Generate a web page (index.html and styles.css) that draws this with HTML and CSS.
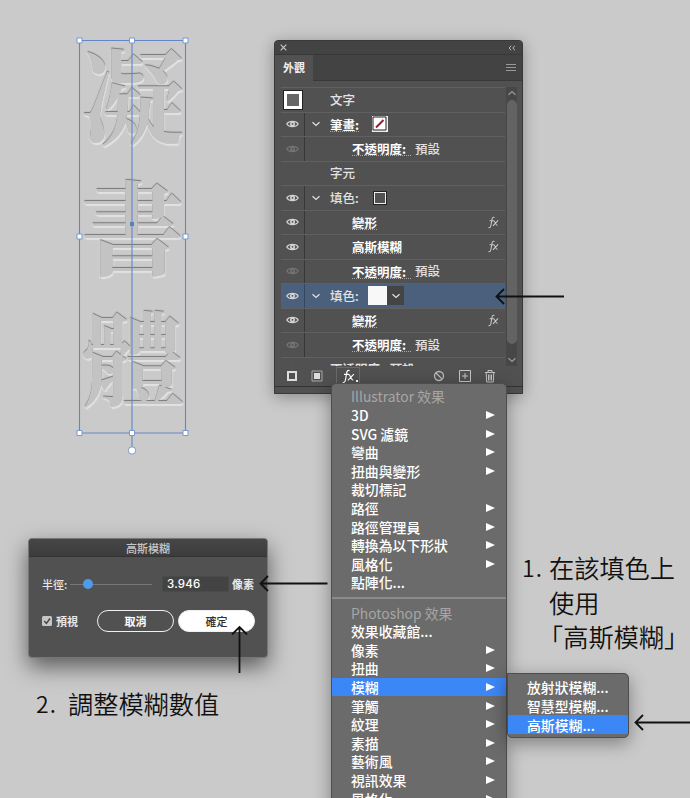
FILE: index.html
```html
<!DOCTYPE html>
<html lang="zh-Hant">
<head>
<meta charset="utf-8">
<title>高斯模糊</title>
<link rel="stylesheet" href="styles.css">
</head>
<body>
<svg class="defs" width="0" height="0" aria-hidden="true">
  <defs>
    <symbol id="eye" viewBox="0 0 14 10"><path d="M.8 5C3.2 1.3 10.8 1.3 13.2 5 10.8 8.7 3.2 8.7.8 5Z" fill="none" stroke="currentColor" stroke-width="1.3"/><circle cx="7" cy="5" r="2.7" fill="currentColor"/><circle cx="7" cy="4.8" r="1" fill="#505050"/></symbol>
    <symbol id="chev" viewBox="0 0 10 6"><path d="M1.5 1.2 5 4.5 8.5 1.2" fill="none" stroke="currentColor" stroke-width="1.2"/></symbol>
    <symbol id="fx" viewBox="0 0 12 14"><path d="M7 1.6C5 .7 4.6 2.2 4.2 4.4L3.2 10C2.8 12.3 2 13 .6 12.4M1.8 5h4.2M6 5c2 0 2 5.3 4.4 5.3M11 4.7 5.4 10.6" fill="none" stroke="currentColor" stroke-width="1.1"/></symbol>
  </defs>
</svg>
<main class="canvas">
  <section class="artwork">
    <div class="glyphs"><span>凝</span><span>書</span><span>體</span></div>
    <svg class="selection" width="120" height="430" viewBox="0 0 120 430">
      <g fill="none" stroke="#6485c8" stroke-width="1.1"><path d="M9.500 10.500H115.500V403H9.500ZM62 10.500V417"/></g>
      <g fill="#fff" stroke="#7699cf"><path d="M7 8h5v5H7zM59.500 8h5v5h-5zM113 8h5v5h-5zM7 204h5v5H7zM113 204h5v5h-5zM7 400.500h5v5H7zM59.500 400.500h5v5h-5zM113 400.500h5v5h-5z"/><circle cx="62" cy="420.500" r="3.700"/></g>
      <path d="M60 192h4v4h-4z" fill="#5b7fc4"/>
    </svg>
  </section>

  <section class="panel">
    <header class="panel-bar">
      <svg width="7" height="7" viewBox="0 0 7 7"><path d="M.7.7 6.300 6.300M6.300.7.7 6.300" stroke="#ccc" stroke-width="1.100"/></svg>
      <svg width="8" height="6" viewBox="0 0 8 6"><path d="M3.300.8 1 3 3.300 5.200M7 .8 4.700 3 7 5.200" fill="none" stroke="#bbb"/></svg>
    </header>
    <div class="tabs"><div class="tab">外觀</div><div class="burger"><i></i><i></i><i></i></div></div>
    <div class="panel-body">
      <div class="list">
        <div class="row plain"><span class="eye"><i class="thumb"></i></span><span class="label">文字</span></div>
        <div class="row"><span class="eye"><svg><use href="#eye"/></svg></span><svg class="chev"><use href="#chev"/></svg><b class="link">筆畫:</b><svg class="none" viewBox="0 0 16 16"><path fill="#eee" d="M0 0h16v16H0z"/><path fill="#fff" stroke="#222" d="M1 1h13v13H1z"/><path d="M4 11.500 11.500 4" stroke="#8a2038" stroke-width="2"/></svg></div>
        <div class="row"><span class="eye off"><svg><use href="#eye"/></svg></span><span class="sub"><b class="link">不透明度:&nbsp;</b><span class="value">預設</span></span></div>
        <div class="row plain"><span class="eye"></span><span class="label">字元</span></div>
        <div class="row"><span class="eye"><svg><use href="#eye"/></svg></span><svg class="chev"><use href="#chev"/></svg><span class="name">填色:</span><i class="swatch"></i></div>
        <div class="row"><span class="eye"><svg><use href="#eye"/></svg></span><span class="sub"><b class="link">變形</b></span><svg class="fx"><use href="#fx"/></svg></div>
        <div class="row"><span class="eye"><svg><use href="#eye"/></svg></span><span class="sub"><b class="link">高斯模糊</b></span><svg class="fx"><use href="#fx"/></svg></div>
        <div class="row"><span class="eye off"><svg><use href="#eye"/></svg></span><span class="sub"><b class="link">不透明度:&nbsp;</b><span class="value">預設</span></span></div>
        <div class="row active"><span class="eye"><svg><use href="#eye"/></svg></span><svg class="chev"><use href="#chev"/></svg><span class="name">填色:</span><i class="fill"></i><span class="drop"><svg width="10" height="6"><use href="#chev"/></svg></span></div>
        <div class="row"><span class="eye"><svg><use href="#eye"/></svg></span><span class="sub"><b class="link">變形</b></span><svg class="fx"><use href="#fx"/></svg></div>
        <div class="row"><span class="eye off"><svg><use href="#eye"/></svg></span><span class="sub"><b class="link">不透明度:&nbsp;</b><span class="value">預設</span></span></div>
        <div class="row plain"><span class="eye off"><svg><use href="#eye"/></svg></span><b class="label">不透明度:&nbsp;&nbsp;預設</b></div>
      </div>
      <div class="scroll"><svg class="up"><use href="#chev"/></svg><i class="handle"></i><svg><use href="#chev"/></svg></div>
    </div>
    <footer class="tools">
      <svg class="t1" width="12" height="12"><path d="M2 2h8v8H2z" fill="none" stroke="#ddd" stroke-width="2"/></svg>
      <svg class="t2" width="12" height="12"><path d="M1 1h10v10H1z" fill="none" stroke="#aaa"/><path d="M3 3h6v6H3z" fill="#ddd"/></svg>
      <span class="fxbtn"><svg width="13" height="15"><use href="#fx"/></svg><i></i></span>
      <svg class="t4" width="12" height="12"><circle cx="6" cy="6" r="4.500" fill="none" stroke="#bbb" stroke-width="1.300"/><path d="m3 3 6 6" stroke="#bbb" stroke-width="1.300"/></svg>
      <svg class="t5" width="12" height="12"><path d="M.5.5h11v11H.5zM6 3v6M3 6h6" fill="none" stroke="#c5c5c5"/></svg>
      <svg class="t6" width="12" height="13"><path d="M1 2.500h10M4 2.500v-2h4v2M2.200 2.500l.5 9.500h6.600l.5-9.500M4.500 4.500v6M6 4.500v6M7.500 4.500v6" fill="none" stroke="#c5c5c5"/></svg>
    </footer>
  </section>

  <nav class="menu effects">
    <div class="item head">Illustrator 效果</div>
    <div class="item more">3D</div>
    <div class="item more">SVG 濾鏡</div>
    <div class="item more">彎曲</div>
    <div class="item more">扭曲與變形</div>
    <div class="item">裁切標記</div>
    <div class="item more">路徑</div>
    <div class="item more">路徑管理員</div>
    <div class="item more">轉換為以下形狀</div>
    <div class="item more">風格化</div>
    <div class="item">點陣化...</div>
    <div class="sep"></div>
    <div class="item head">Photoshop 效果</div>
    <div class="item">效果收藏館...</div>
    <div class="item more">像素</div>
    <div class="item more">扭曲</div>
    <div class="item more on">模糊</div>
    <div class="item more">筆觸</div>
    <div class="item more">紋理</div>
    <div class="item more">素描</div>
    <div class="item more">藝術風</div>
    <div class="item more">視訊效果</div>
    <div class="item more">風格化</div>
  </nav>

  <nav class="menu blurs">
    <div class="item">放射狀模糊...</div>
    <div class="item">智慧型模糊...</div>
    <div class="item on">高斯模糊...</div>
  </nav>

  <section class="dialog">
    <header>高斯模糊</header>
    <div class="radius"><span class="rl">半徑:</span><span class="slider"><i></i></span><span class="field">3.946</span><b>像素</b></div>
    <div class="actions">
      <svg width="10" height="10"><rect width="10" height="10" rx="1.500" fill="#c6c6c6"/><path d="m2.200 5 2.200 2.300L8 2.500" fill="none" stroke="#444" stroke-width="1.400"/></svg>
      <b>預視</b><span class="btn cancel">取消</span><span class="btn ok">確定</span>
    </div>
  </section>

  <div class="note one"><span>1.</span><p>在該填色上<br>使用<br><span class="quote">「高斯模糊」</span></p></div>
  <div class="note two"><span>2.</span><p>調整模糊數值</p></div>

  <svg class="arrows" width="690" height="798" viewBox="0 0 690 798">
    <g fill="none" stroke="#111" stroke-width="1.800">
      <path d="M564 296.500H496.500M504 289l-7.500 7.500 7.500 7.500"/>
      <path d="M327.500 583.500H261M268 576l-7.500 7.500 7.500 7.500"/>
      <path d="M239.500 673V627M232 634.500l7.500-7.500 7.500 7.500"/>
      <path d="M690 722.500H635.500M643 715l-7.500 7.500 7.500 7.500"/>
    </g>
  </svg>
</main>
</body>
</html>
```

FILE: styles.css
```css
* { box-sizing: border-box; }
body { margin: 0; background: #cacaca; font-family: "Noto Sans CJK TC", sans-serif; }
p { margin: 0; }
svg { display: block; flex: none; }
i { display: block; flex: none; }
.defs { position: absolute; }
.canvas { position: relative; width: 690px; height: 798px; overflow: hidden; background: #cacaca; }

.artwork { position: absolute; left: 70px; top: 30px; width: 120px; height: 430px; }
.glyphs { display: flex; flex-direction: column; align-items: center; padding: 0 0 0 5px; }
.glyphs span {
  height: 131.500px; line-height: 122px; font-size: 103px; font-weight: 700;
  font-family: "Noto Serif CJK TC", "Noto Sans CJK TC", serif; color: #c3c3c3;
  text-shadow: 0 -1px 1px #777, 1px 1.500px 1px #e2e2e2, -1px 1px 1px #d9d9d9;
}
.selection { position: absolute; left: 0; top: 0; }

.panel {
  position: absolute; left: 274px; top: 40px; width: 249px; height: 354px;
  display: flex; flex-direction: column; background: #515151; color: #e2e2e2;
  border: 1px solid #393939; border-radius: 4px 4px 0 0;
  box-shadow: 0 3px 16px rgba(0,0,0,.32); font-size: 12.500px; font-weight: 500;
}
.panel-bar { height: 14px; display: flex; align-items: center; justify-content: space-between; padding: 0 6px 0 5px; background: #434343; border-bottom: 1px solid #383838; border-radius: 4px 4px 0 0; }
.tabs { height: 26px; display: flex; justify-content: space-between; align-items: center; background: #434343; border-bottom: 1px solid #393939; padding-right: 6px; }
.tab { height: 26px; width: 38px; line-height: 24px; text-align: center; background: #515151; font-size: 11px; font-weight: 700; color: #f0f0f0; }
.burger { width: 10px; display: flex; flex-direction: column; gap: 2px; }
.burger i { height: 1.300px; background: #999; }
.panel-body { display: flex; margin: 6px 5px 0 6px; height: 279px; gap: 1px; }
.list { width: 225px; overflow: hidden; border-top: 1px solid #606060; }
.row { display: flex; align-items: center; height: 24.500px; border-bottom: 1px solid #606060; line-height: 22px; white-space: nowrap; }
.eye { flex: none; width: 24px; height: 100%; display: flex; align-items: center; justify-content: center; border-right: 1px solid #373737; color: #d2d2d2; }
.plain .eye { border-color: transparent; }
.eye svg { width: 13px; height: 10px; }
.eye.off { color: #747474; }
.thumb { width: 18px; height: 18px; border: 3px solid #fff; outline: 1px solid #222; background: #666; }
.label { padding-left: 25px; }
.chev { width: 10px; height: 6px; margin: 0 9px 0 6px; }
.name, .row > .link { width: 30px; }
.link { font-weight: 700; color: #fff; line-height: 15px; background: repeating-linear-gradient(90deg, #aaa 0 1px, transparent 1px 2px) bottom / 100% 1px no-repeat; }
.sub { padding-left: 47px; flex: 1; display: flex; align-items: center; }
.sub .link:not(:last-child) { width: 60px; margin-right: 3px; }
.none { width: 16px; height: 16px; margin-left: 12px; }
.swatch { width: 12px; height: 12px; margin-left: 14px; border: 1px solid #eee; outline: 1px solid #222; }
.fx { width: 11px; height: 13px; margin-right: 6px; color: #ccc; }
.active { background: #4a607d; }
.active .eye { border-color: #334660; }
.fill { width: 19px; height: 19px; margin-left: 8px; background: #f8f8f8; }
.drop { width: 17px; height: 19px; display: flex; align-items: center; justify-content: center; background: #444; }
.scroll { width: 11px; display: flex; flex-direction: column; align-items: center; background: #474747; padding: 3px 0; color: #999; }
.scroll svg { width: 10px; height: 6px; }
.scroll .up { transform: rotate(180deg); }
.handle { width: 10px; height: 244px; margin: 4px 0 13px; border-radius: 5px; background: #636363; }
.tools { height: 21px; display: flex; align-items: center; border-bottom: 1px solid #333; padding-left: 11px; margin-right: -1px; }
.t2 { margin-left: 13px; }
.fxbtn { width: 24px; height: 19px; margin-left: 13px; border: 1px solid #6a6a6a; display: flex; align-items: center; gap: 1px; padding-left: 5px; color: #fff; }
.fxbtn i { width: 2px; height: 2px; background: #fff; margin-top: 9px; }
.t4 { margin-left: 73px; }
.t5 { margin-left: 14px; }
.t6 { margin-left: 13px; }

.menu { position: absolute; background: #6b6b6b; border: 1px solid #4d4d4d; box-shadow: 0 5px 18px rgba(0,0,0,.38); color: #fff; font-size: 13.850px; font-weight: 500; }
.item { display: flex; align-items: center; justify-content: space-between; height: 18.620px; line-height: 18px; padding: 0 11px 0 19px; white-space: nowrap; }
.head { color: #a6a6a6; font-weight: 400; }
.more::after { content: ""; border-left: 9px solid #fff; border-top: 4.500px solid transparent; border-bottom: 4.500px solid transparent; }
.on { background: #3c87f6; }
.effects { left: 331px; top: 383px; width: 176px; height: 440px; padding-top: 3px; border-radius: 5px 5px 0 0; }
.sep { height: 2px; margin: 5px 0 4.500px; background: #8b8b8b; }
.blurs { left: 507px; top: 673px; width: 122px; height: 65px; padding-top: 4px; border-radius: 0 5px 5px 5px; }

.dialog { position: absolute; left: 28px; top: 538px; width: 240px; height: 120px; background: #515151; border: 1px solid #777; border-radius: 4px; box-shadow: 0 9px 22px rgba(0,0,0,.55); color: #e8e8e8; font-size: 11px; font-weight: 500; }
.dialog header { height: 18px; line-height: 18px; text-align: center; background: linear-gradient(#464646, #3c3c3c); border-bottom: 1px solid #333; border-radius: 3px 3px 0 0; color: #c8c8c8; }
.radius { display: flex; align-items: center; height: 16px; margin: 19px 0 0 13px; white-space: nowrap; }
.rl { width: 28px; }
.slider { width: 82px; height: 10px; display: flex; align-items: center; padding-left: 13px; background: linear-gradient(#777, #777) center / 100% 1px no-repeat; }
.slider i { width: 10px; height: 10px; border-radius: 50%; background: #4d9bea; }
.field { width: 67px; height: 16px; line-height: 16px; margin: 0 3px 0 10px; padding-left: 4px; background: #434343; border: 1px solid #4a4a4a; line-height: 14px; color: #fff; font: 500 11.500px/14px Inter, sans-serif; letter-spacing: .2px; }
.actions { display: flex; align-items: center; margin: 18px 0 0 13px; height: 22px; }
.actions b { margin-left: 4px; width: 23px; }
.btn { width: 77px; height: 22px; line-height: 20px; text-align: center; border: 1px solid #f0f0f0; border-radius: 11px; color: #fff; }
.cancel { margin-left: 18px; font-weight: 700; }
.ok { margin-left: 4px; background: #fff; color: #333; }

.note { position: absolute; display: flex; font-size: 25.200px; line-height: 34.700px; font-weight: 350; color: #111; white-space: nowrap; }
.one { left: 522px; top: 550px; }
.one > span, .two > span { font-size: 23px; letter-spacing: 1px; }
.one > span { width: 27px; }
.two { left: 36px; top: 686px; }
.two > span { width: 32px; }
.quote { margin-left: -11px; }
.arrows { position: absolute; left: 0; top: 0; pointer-events: none; }
```
